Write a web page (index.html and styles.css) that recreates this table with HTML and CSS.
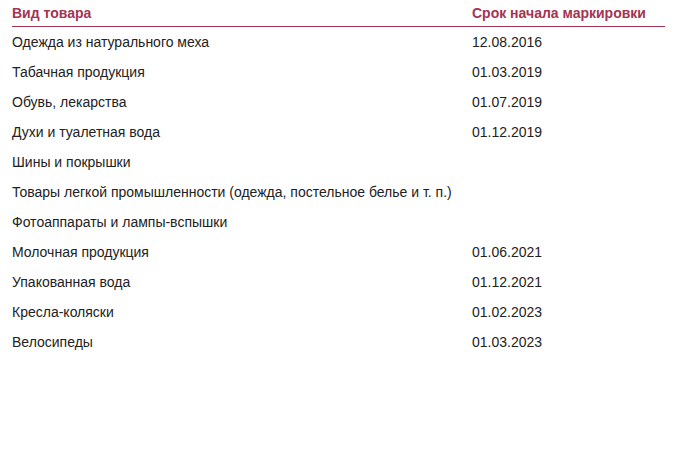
FILE: index.html
```html
<!DOCTYPE html>
<html lang="ru">
<head>
<meta charset="utf-8">
<link rel="stylesheet" href="styles.css">
</head>
<body>
<table class="tbl">
  <thead>
    <tr><th class="c1">Вид товара</th><th class="c2">Срок начала маркировки</th></tr>
  </thead>
  <tbody>
    <tr><td>Одежда из натурального меха</td><td>12.08.2016</td></tr>
    <tr><td>Табачная продукция</td><td>01.03.2019</td></tr>
    <tr><td>Обувь, лекарства</td><td>01.07.2019</td></tr>
    <tr><td>Духи и туалетная вода</td><td>01.12.2019</td></tr>
    <tr><td>Шины и покрышки</td><td></td></tr>
    <tr><td>Товары легкой промышленности (одежда, постельное белье и т. п.)</td><td></td></tr>
    <tr><td>Фотоаппараты и лампы-вспышки</td><td></td></tr>
    <tr><td>Молочная продукция</td><td>01.06.2021</td></tr>
    <tr><td>Упакованная вода</td><td>01.12.2021</td></tr>
    <tr><td>Кресла-коляски</td><td>01.02.2023</td></tr>
    <tr><td>Велосипеды</td><td>01.03.2023</td></tr>
  </tbody>
</table>
</body>
</html>
```
FILE: styles.css
```css
html, body {
  margin: 0;
  padding: 0;
  background: #fff;
}
body {
  padding-left: 12px;
  font-family: "Liberation Sans", Arial, sans-serif;
  font-size: 14px;
  color: #222;
}
.tbl {
  border-collapse: collapse;
  width: 653px;
}
.tbl th {
  text-align: left;
  font-weight: bold;
  color: #a33452;
  height: 26px;
  padding: 0;
  vertical-align: middle;
  border-bottom: 1px solid #a33452;
  box-sizing: border-box;
}
.tbl .c1 { width: 460px; }
.tbl td {
  padding: 0;
  height: 30px;
  vertical-align: middle;
  white-space: nowrap;
}
```
